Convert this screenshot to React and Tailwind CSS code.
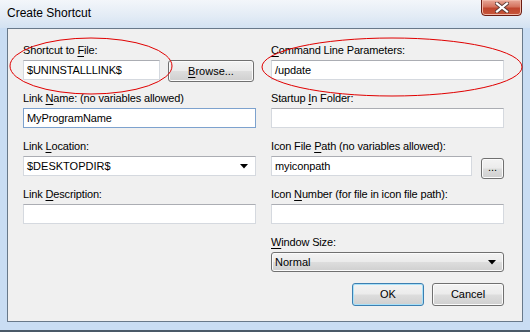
import React from "react";

const font = { fontFamily: '"Liberation Sans", Arial, sans-serif' };

function Label({ children }) {
  return <div className="h-[15px] mb-[2px] leading-[15px] text-[11px] tracking-[-0.15px] text-black whitespace-nowrap">{children}</div>;
}

function TextBox({ value, className = "", hover = false }) {
  return (
    <div
      className={
        "h-[20px] bg-white border px-[3px] leading-[18px] text-[11px] tracking-[-0.1px] text-black " +
        (hover ? "border-[#7da2ce] " : "border-[#d5d9df] border-t-[#abadb3] ") +
        className
      }
    >
      {value}
    </div>
  );
}

function Arrow() {
  return (
    <svg width="8" height="5" viewBox="0 0 8 5">
      <path d="M0 0 H8 L4 4.5 Z" fill="#000" />
    </svg>
  );
}

function Btn({ children, className = "", def = false }) {
  return (
    <div
      className={
        "flex items-center justify-center rounded-[3px] border text-[11px] text-black " +
        (def
          ? "border-[#3c7fb1] shadow-[inset_0_0_0_1px_#a8e0f8] "
          : "border-[#707070] shadow-[inset_0_0_0_1px_#fbfbfb] ") +
        "bg-[linear-gradient(to_bottom,#f3f3f3_0%,#ebebeb_48%,#dddddd_52%,#cfcfcf_100%)] " +
        className
      }
    >
      {children}
    </div>
  );
}

const U = ({ children }) => <span className="underline underline-offset-2">{children}</span>;

export default function App() {
  return (
    <div style={font} className="relative w-[530px] h-[332px] overflow-hidden bg-[#c9ddf3]">
      {/* title bar */}
      <div className="h-[28px] flex items-start justify-between bg-[linear-gradient(to_bottom,#f3f6fa,#e2ebf5_60%,#d3e2f2)]">
        <div className="pl-[7px] pt-[5px] text-[12px] text-black leading-[16px]">Create Shortcut</div>
        <div className="mr-[8px] w-[41px] h-[17px] -mt-px rounded-b-[4px] border border-[#6b1c12] flex items-center justify-center bg-[linear-gradient(to_bottom,#e8a898_0%,#d4735e_45%,#c0462e_55%,#c6563b_100%)] shadow-[inset_0_0_0_1px_#f0b8a8]">
          <svg width="14" height="11" viewBox="0 0 14 11">
            <path d="M2 1.5 L12 9.5 M12 1.5 L2 9.5" stroke="#5c3a36" strokeWidth="4" strokeLinecap="square" />
            <path d="M2 1.5 L12 9.5 M12 1.5 L2 9.5" stroke="#ffffff" strokeWidth="2.2" strokeLinecap="square" />
          </svg>
        </div>
      </div>

      {/* client area */}
      <div className="mx-[7px] h-[294px] border border-[#68798a] bg-[#f0f0f0] pt-[14px] pl-[15px] pr-[17px] flex gap-[15px]">
        {/* left column */}
        <div className="w-[233px] flex flex-col gap-[11px]">
          <div>
            <Label>
              Shortcut to <U>F</U>ile:
            </Label>
            <div className="flex items-start h-[20px] gap-[8px]">
              <TextBox value="$UNINSTALLLINK$" className="w-[137px]" />
              <Btn className="w-[86px] h-[22px]">
                <U>B</U>rowse...
              </Btn>
            </div>
          </div>
          <div>
            <Label>
              Link <U>N</U>ame: (no variables allowed)
            </Label>
            <TextBox value="MyProgramName" hover />
          </div>
          <div>
            <Label>
              Link <U>L</U>ocation:
            </Label>
            <div className="h-[20px] bg-white border border-[#d5d9df] border-t-[#abadb3] pl-[3px] pr-[7px] flex items-center justify-between text-[11px]">
              <span>$DESKTOPDIR$</span>
              <Arrow />
            </div>
          </div>
          <div>
            <Label>
              Link <U>D</U>escription:
            </Label>
            <TextBox value="" />
          </div>
        </div>

        {/* right column */}
        <div className="w-[233px] flex flex-col gap-[11px]">
          <div>
            <Label>
              <U>C</U>ommand Line Parameters:
            </Label>
            <TextBox value="/update" />
          </div>
          <div>
            <Label>
              Startup <U>I</U>n Folder:
            </Label>
            <TextBox value="" />
          </div>
          <div>
            <Label>
              Icon File <U>P</U>ath (no variables allowed):
            </Label>
            <div className="flex items-start h-[20px] gap-[9px]">
              <TextBox value="myiconpath" className="w-[201px]" />
              <Btn className="w-[23px] h-[21px] mt-[2px] leading-none pb-[3px]">...</Btn>
            </div>
          </div>
          <div>
            <Label>
              Icon <U>N</U>umber (for file in icon file path):
            </Label>
            <TextBox value="" />
          </div>
          <div>
            <Label>
              <U>W</U>indow Size:
            </Label>
            <Btn className="h-[20px] !justify-between pl-[3px] pr-[7px]">
              <span>Normal</span>
              <Arrow />
            </Btn>
          </div>
          <div className="flex justify-end gap-[8px]">
            <Btn def className="w-[72px] h-[23px]">OK</Btn>
            <Btn className="w-[72px] h-[23px]">Cancel</Btn>
          </div>
        </div>
      </div>

      {/* bottom frame edge */}
      <div className="absolute left-0 right-0 bottom-0 h-[2px] bg-[#4a5968]" />

      {/* annotation ellipses */}
      <svg className="absolute inset-0 pointer-events-none" width="530" height="332">
        <ellipse cx="91" cy="66" rx="81" ry="28" fill="none" stroke="#e00000" strokeWidth="1" />
        <ellipse cx="392" cy="67" rx="130" ry="29" fill="none" stroke="#e00000" strokeWidth="1" />
      </svg>
    </div>
  );
}
